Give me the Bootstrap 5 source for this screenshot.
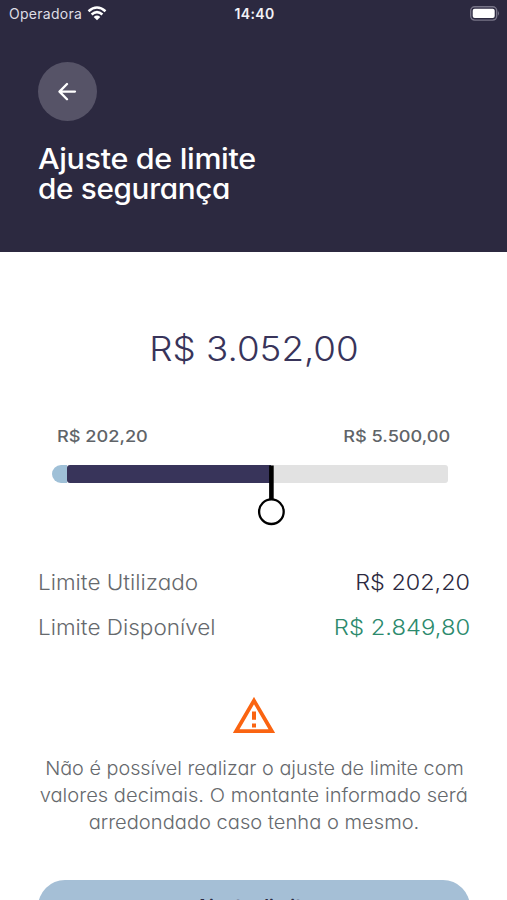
<!DOCTYPE html>
<html lang="pt-BR">
<head>
<meta charset="utf-8">
<meta name="viewport" content="width=device-width, initial-scale=1">
<title>Ajuste de limite de segurança</title>
<link href="https://cdn.jsdelivr.net/npm/bootstrap@5.3.0/dist/css/bootstrap.min.css" rel="stylesheet">
<style>
body{font-family:Inter,"Liberation Sans",sans-serif;font-feature-settings:"cv11";background:#fff;color:#66696d;height:900px;overflow:hidden}
.app-head{background:#2c2940;height:252px}
.status{height:28px;font-size:14px;padding:0 7px 2px 9px;color:#dedde5;font-feature-settings:normal}
.status>div{flex:1 1 0}
.operator{letter-spacing:.28px}
.carrier-signal{margin-left:5px}
.clock{font-weight:600;letter-spacing:.35px;color:#f3f2f7}
.gutter{padding-left:38px;padding-right:37px}
.back{width:59px;height:59px;background:#565367;margin-top:34px}
.headline{font-size:28px;line-height:29.5px;font-weight:500;color:#fff;margin:24px 0 0;letter-spacing:-.3px}
/* Extended letterforms */
.wide{display:inline-block;transform:scaleX(1.08)}
.wide-l{transform-origin:left}
.wide-r{transform-origin:right}
.headline .wide{transform:scaleX(1.088)}
.headline .wide:last-child{transform:scaleX(1.06)}
.amount{font-size:34px;line-height:42px;font-weight:300;color:#38345a;margin-top:76px}
.range{margin:54px 59px 0 52px}
.ends{font-size:16.5px;line-height:24px;font-weight:500;padding-left:5px;color:#606468;margin-right:-2px}
.ends .wide{transform:scaleX(1.1)}
.track{height:18.5px;margin-top:16.5px}
.used{width:15px;background:#9fc0d7;border-radius:9px 0 0 9px}
.chosen{width:204px;background:#38345a;border-radius:3px 0 0 3px}
.free{background:#e2e2e2;border-radius:0 3px 3px 0}
.knob{left:205px;top:0}
.rows{margin-top:85px;font-size:21px;line-height:30px;font-weight:300}
.rows>div+div{margin-top:15px}
.rows .wide-l{transform:scaleX(1.072)}
.rows .dark-value{color:#2c2940;transform:scaleX(1.115)}
.rows .green-value{color:#2c8a6d;transform:scaleX(1.135)}
.warn{margin-top:54px}
.note{font-size:18.5px;line-height:27px;font-weight:300;margin:21px 0 0}
.note .wide:first-child{transform:scaleX(1.071)}
.note .wide{transform:scaleX(1.088)}
.cta{height:54px;border-radius:27px;background:#a5bfd6;color:#2c2940;font-weight:600;font-size:17px;margin-top:44px;border:0}
</style>
<script src="https://cdn.jsdelivr.net/npm/bootstrap@5.3.0/dist/js/bootstrap.bundle.min.js"></script>
</head>
<body>
<header class="app-head">
  <div class="status d-flex align-items-center">
    <div class="d-flex align-items-center"><span class="operator">Operadora</span>
      <svg class="carrier-signal" width="20" height="15" viewBox="0 0 20 15" fill="none" stroke="#fff" stroke-width="2.5"><path d="M1.5 5.2Q10-2.2 18.5 5.2M4.6 8.5Q10 3.8 15.4 8.5"/><path d="M6.7 10.9Q10 8 13.3 10.9L10 14.3Z" fill="#fff" stroke="none"/></svg>
    </div>
    <div class="clock text-center">14:40</div>
    <div class="d-flex justify-content-end"><svg width="30" height="15" viewBox="0 0 30 15"><rect x=".7" y=".7" width="26" height="13.4" rx="4" fill="none" stroke="#777487" stroke-width="1.4"/><rect x="2.7" y="2.7" width="22" height="9.4" rx="2" fill="#fff"/><path d="M28 5q2 2.4 0 4.8Z" fill="#777487"/></svg></div>
  </div>
  <div class="gutter">
    <button class="back btn rounded-circle border-0 p-0 d-flex align-items-center justify-content-center" aria-label="Voltar"><svg width="20" height="20" viewBox="0 0 20 20" fill="none" stroke="#fff" stroke-width="2.3" stroke-linecap="round" stroke-linejoin="round"><path d="M17 9.6H2.2M9 2L1.5 9.6l7.5 7.6"/></svg></button>
    <h1 class="headline"><span class="wide wide-l">Ajuste de limite</span><br><span class="wide wide-l">de segurança</span></h1>
  </div>
</header>
<main>
  <div class="amount text-center"><span class="wide">R$ 3.052,00</span></div>
  <section class="range">
    <div class="ends d-flex justify-content-between"><span class="wide wide-l">R$ 202,20</span><span class="wide wide-r">R$ 5.500,00</span></div>
    <div class="track d-flex position-relative">
      <div class="used"></div><div class="chosen"></div><div class="free flex-fill"></div>
      <svg class="knob position-absolute" width="28" height="61" viewBox="0 0 28 61"><path d="M14.4 .5V34" stroke="#000" stroke-width="4.6"/><circle cx="14.4" cy="46.7" r="12.3" fill="#fff" stroke="#000" stroke-width="2.3"/></svg>
    </div>
  </section>
  <section class="rows gutter">
    <div class="d-flex justify-content-between"><span class="wide wide-l">Limite Utilizado</span><span class="wide wide-r dark-value">R$ 202,20</span></div>
    <div class="d-flex justify-content-between"><span class="wide wide-l">Limite Disponível</span><span class="wide wide-r green-value">R$ 2.849,80</span></div>
  </section>
  <section class="gutter text-center">
    <svg class="warn d-block mx-auto" width="42" height="37" viewBox="0 0 42 37"><path d="M21 3.6L38.9 34.2H3.1Z" fill="none" stroke="#fa6411" stroke-width="3.8"/><path d="M21 14.6v8.2M21 26.5v4" stroke="#fa6411" stroke-width="4"/></svg>
    <p class="note"><span class="wide">Não é possível realizar o ajuste de limite com</span><br><span class="wide">valores decimais. O montante informado será</span><br><span class="wide">arredondado caso tenha o mesmo.</span></p>
    <button class="cta btn w-100 p-0"><span class="wide">Ajustar limite</span></button>
  </section>
</main>
</body>
</html>
